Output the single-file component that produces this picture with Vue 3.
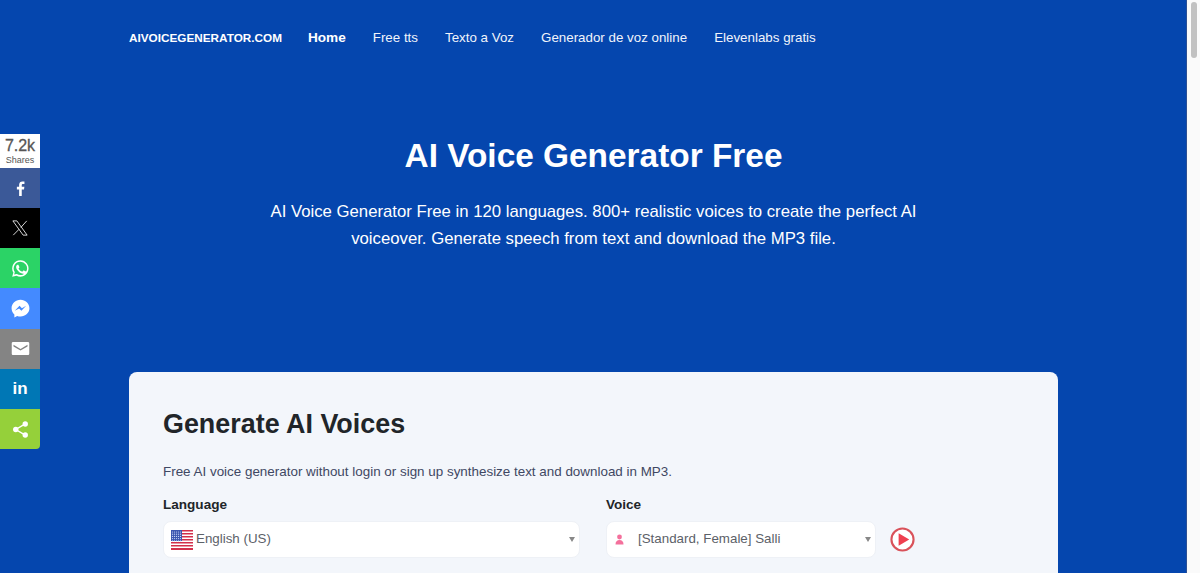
<template>
  <div class="page">
    <div class="main">
      <!-- Share bar -->
      <aside class="share">
        <div class="share-count">
          <strong>7.2k</strong>
          <span>Shares</span>
        </div>
        <a class="share-btn fb">
          <svg width="15" height="15" viewBox="0 0 24 24"><path fill="#fff" d="M14 24V13.4h3.6l.6-4.2H14V6.6c0-1.2.4-2 2.100-2h2.200V.9C17.900.8 16.600.7 15.100.7c-3.200 0-5.300 1.900-5.300 5.400v3.100H6.200v4.200h3.600V24z"/></svg>
        </a>
        <a class="share-btn x">
          <svg width="18" height="18" viewBox="0 0 24 24"><path fill="none" stroke="#fff" stroke-width="1.100" d="M2.500 2.500h5.300l13.700 19h-5.300zM21 2.500l-7.900 8.800M10.700 13.700 3 21.500"/></svg>
        </a>
        <a class="share-btn wa">
          <svg width="19" height="19" viewBox="0 0 24 24"><path fill="#fff" d="M12 1.500A10.400 10.400 0 0 0 3 17.200L1.500 22.500l5.400-1.400A10.400 10.400 0 1 0 12 1.500zm0 2a8.400 8.400 0 1 1-4.600 15.500l-.4-.2-3 .8.800-3-.2-.4A8.400 8.400 0 0 1 12 3.500zM8.500 7.300c-.2 0-.6.100-.9.400-.4.400-1.100 1.100-1.100 2.600s1.100 3 1.300 3.200c.2.200 2.200 3.400 5.300 4.600 2.600 1 3.100.8 3.700.8.600-.1 1.800-.8 2-1.500.3-.7.300-1.300.2-1.500-.1-.1-.3-.2-.6-.4l-2.100-1c-.3-.1-.5-.2-.7.100l-1 1.200c-.2.200-.4.300-.7.100-.3-.2-1.300-.5-2.500-1.500-.9-.8-1.500-1.800-1.700-2.100-.2-.3 0-.5.100-.6l.5-.6.300-.5c.1-.2.100-.4 0-.5l-1-2.300c-.2-.6-.5-.6-.7-.6z"/></svg>
        </a>
        <a class="share-btn ms">
          <svg width="21" height="21" viewBox="0 0 24 24"><path fill="#fff" d="M12 2C6.300 2 1.800 6.200 1.800 11.700c0 2.900 1.200 5.400 3.200 7.100v3.500l3.200-1.800c1.200.4 2.500.6 3.800.6 5.700 0 10.200-4.200 10.200-9.400S17.700 2 12 2zm1 12.700-2.600-2.800-5 2.800 5.500-5.900 2.700 2.800 4.900-2.800z"/></svg>
        </a>
        <a class="share-btn em">
          <svg width="21" height="21" viewBox="0 0 24 24"><path fill="#fff" d="M3.500 4.500h17c.8 0 1.500.7 1.500 1.500v12c0 .8-.7 1.500-1.500 1.500h-17C2.700 19.500 2 18.800 2 18V6c0-.8.700-1.500 1.500-1.500zM12 12.600 4 7.800v1.800l8 4.800 8-4.800V7.800z"/></svg>
        </a>
        <a class="share-btn li">in</a>
        <a class="share-btn more">
          <svg width="19" height="19" viewBox="0 0 24 24"><path fill="none" stroke="#fff" stroke-width="1.800" d="M18 5 6 12l12 7"/><circle cx="18" cy="5" r="3.400" fill="#fff"/><circle cx="6" cy="12" r="3.400" fill="#fff"/><circle cx="18" cy="19" r="3.400" fill="#fff"/></svg>
        </a>
      </aside>

      <!-- Nav -->
      <nav class="nav">
        <a class="brand">AIVOICEGENERATOR.COM</a>
        <a class="link active">Home</a>
        <a class="link">Free tts</a>
        <a class="link">Texto a Voz</a>
        <a class="link">Generador de voz online</a>
        <a class="link">Elevenlabs gratis</a>
      </nav>

      <!-- Hero -->
      <header class="hero">
        <h1>AI Voice Generator Free</h1>
        <p>AI Voice Generator Free in 120 languages. 800+ realistic voices to create the perfect AI voiceover. Generate speech from text and download the MP3 file.</p>
      </header>

      <!-- Generator card -->
      <section class="card">
        <h2>Generate AI Voices</h2>
        <p class="intro">Free AI voice generator without login or sign up synthesize text and download in MP3.</p>
        <div class="fields">
          <div class="field lang">
            <label>Language</label>
            <div class="select">
              <svg class="flag" width="22" height="22" viewBox="0 0 22 22">
                <rect y="1" width="22" height="20" fill="#fff"/>
                <g fill="#d22f4a">
                  <rect y="1" width="22" height="1.500"/><rect y="4" width="22" height="1.500"/><rect y="7" width="22" height="1.500"/><rect y="10" width="22" height="1.500"/><rect y="13" width="22" height="1.500"/><rect y="16" width="22" height="1.500"/><rect y="19" width="22" height="2"/>
                </g>
                <rect y="1" width="11" height="11" fill="#3c56b0"/>
                <g fill="#c9d3f2">
                  <circle v-for="s in stars" :key="s[0] + '-' + s[1]" :cx="s[0]" :cy="s[1]" r=".6"/>
                </g>
              </svg>
              <span class="value">English (US)</span>
              <i class="caret"></i>
            </div>
          </div>
          <div class="field voice">
            <label>Voice</label>
            <div class="voice-row">
              <div class="select">
                <svg class="person" width="9" height="11" viewBox="0 0 9 11"><circle cx="4.500" cy="3" r="2.400" fill="#f4709c"/><path fill="#f4709c" d="M0.500 10.500c0-2.800 1.500-4.500 4-4.500s4 1.700 4 4.500z"/></svg>
                <span class="value">[Standard, Female] Salli</span>
                <i class="caret"></i>
              </div>
              <svg class="play" width="25" height="25" viewBox="0 0 26 26"><circle cx="13" cy="13" r="11.500" fill="#fff" stroke="#d9525a" stroke-width="2.200"/><path fill="#ef4050" d="M9 6.500 20 13 9 19.500z"/></svg>
            </div>
          </div>
        </div>
      </section>
    </div>

    <!-- Scrollbar -->
    <div class="scrollbar"><div class="thumb"></div></div>
  </div>
</template>

<script setup>
const stars = []
for (let y = 3; y < 12; y += 2.2) {
  for (let x = 1.5; x < 11; x += 2) {
    stars.push([x, y])
  }
}
</script>

<style>
html, body {
  margin: 0;
  overflow: hidden;
}
</style>

<style scoped>
.page {
  display: flex;
  height: 573px;
  overflow: hidden;
  font-family: "Liberation Sans", Arial, sans-serif;
}

.main {
  position: relative;
  flex: 1;
  min-width: 0;
  background: #0546ae;
  border-right: 1px solid #2b4f94;
  padding: 0 128px 0 129px;
}

.scrollbar {
  width: 13px;
  background: #fafafa;
  padding: 2px 3px 0 4px;
  box-sizing: border-box;
}

.thumb {
  width: 6px;
  height: 56px;
  border-radius: 3px;
  background: #c1c1c1;
}

/* Share bar */
.share {
  position: absolute;
  left: 0;
  top: 134px;
  width: 40px;
  display: flex;
  flex-direction: column;
}

.share-count {
  height: 34px;
  background: #fff;
  display: flex;
  flex-direction: column;
  align-items: center;
  color: #555;
}

.share-count strong {
  font-size: 16px;
  font-weight: 400;
  line-height: 18px;
  margin-top: 3px;
  -webkit-text-stroke: 0.3px #555;
}

.share-count span {
  font-size: 9px;
  line-height: 10px;
}

.share-btn {
  height: 40.200px;
  display: flex;
  align-items: center;
  justify-content: center;
  color: #fff;
}

.fb { background: #3b5998; height: 40px; }
.x { background: #000; }
.wa { background: #2bd366; }
.ms { background: #448aff; }
.em { background: #848484; }
.li { background: #0077b5; font-weight: 700; font-size: 17px; }
.more { background: #95d03a; border-radius: 0 0 4px 0; }

/* Nav */
.nav {
  display: flex;
  align-items: center;
  height: 75px;
  color: #fff;
}

.brand {
  font-size: 11.750px;
  font-weight: 700;
  margin-right: 26px;
}

.link {
  font-size: 13.350px;
  margin-right: 27px;
  color: #f1f4fb;
}

.link.active {
  font-size: 13.600px;
  font-weight: 700;
  color: #fff;
}

/* Hero */
.hero {
  text-align: center;
  color: #fff;
  padding-top: 58px;
  height: 240px;
  box-sizing: border-box;
  margin-bottom: 57px;
}

.hero h1 {
  margin: 0 0 19px;
  font-size: 33.400px;
  line-height: 46px;
  font-weight: 700;
}

.hero p {
  margin: 0 auto;
  width: 680px;
  font-size: 16.740px;
  line-height: 27px;
}

/* Card */
.card {
  background: #f3f6fb;
  border-radius: 8px;
  padding: 35px 34px 34px;
  height: 300px;
  box-sizing: border-box;
}

.card h2 {
  margin: 0 0 21px;
  font-size: 26.900px;
  line-height: 34px;
  font-weight: 700;
  color: #212529;
}

.intro {
  margin: 0 0 14px;
  font-size: 13.420px;
  line-height: 20px;
  color: #3f4863;
}

.fields {
  display: flex;
}

.lang {
  width: 443px;
}

.voice {
  flex: 1;
}

label {
  display: block;
  font-size: 13.550px;
  line-height: 18px;
  font-weight: 700;
  color: #212529;
  margin-bottom: 7px;
}

.select {
  position: relative;
  display: flex;
  align-items: center;
  height: 37px;
  box-sizing: border-box;
  background: #fff;
  border: 1px solid #eef1f6;
  border-radius: 8px;
  font-size: 13.350px;
  color: #5c6168;
}

.value {
  margin-top: -2px;
}

.lang .select {
  width: 417px;
  padding-left: 7px;
}

.flag {
  margin-right: 3px;
}

.voice-row {
  display: flex;
  align-items: center;
  gap: 14px;
}

.voice-row .select {
  width: 270px;
  padding-left: 8px;
}

.person {
  margin-right: 14px;
}

.caret {
  position: absolute;
  right: 4px;
  width: 0;
  height: 0;
  border-left: 3.500px solid transparent;
  border-right: 3.500px solid transparent;
  border-top: 5px solid #888;
}

.play {
  flex: none;
}
</style>
